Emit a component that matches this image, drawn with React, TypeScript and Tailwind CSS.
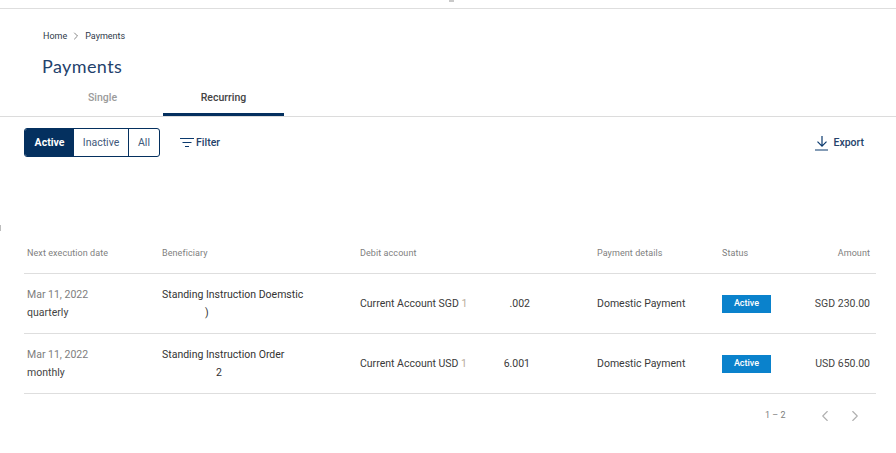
import { ChevronLeft, ChevronRight } from "lucide-react";

const rows = [
  {
    date: "Mar 11, 2022",
    freq: "quarterly",
    name: "Standing Instruction Doemstic",
    ref: ")",
    refPad: "pl-[43px]",
    acc: "Current Account SGD",
    accEnd: ".002",
    amount: "SGD 230.00",
  },
  {
    date: "Mar 11, 2022",
    freq: "monthly",
    name: "Standing Instruction Order",
    ref: "2",
    refPad: "pl-[54px]",
    acc: "Current Account USD",
    accEnd: "6.001",
    amount: "USD 650.00",
  },
];

const cols = "grid grid-cols-[135px_198px_237px_125px_1fr] pl-[3px] pr-[6px]";

function FilterIcon() {
  return (
    <svg width="14" height="11" viewBox="0 0 14 11" fill="none" stroke="#0b3a6e" strokeWidth="1.2">
      <path d="M0 1.5h14M2.5 5.5h9M5 9.5h4" />
    </svg>
  );
}

function ExportIcon() {
  return (
    <svg width="14" height="15" viewBox="0 0 14 15" fill="none" stroke="#0b3a6e" strokeWidth="1.2">
      <path d="M7 0v10M2.5 5.7 7 10.2l4.5-4.5M0 14h13" />
    </svg>
  );
}

export default function App() {
  return (
    <div className="relative h-[453px] w-[896px] overflow-hidden bg-white font-['Roboto',sans-serif] text-[#333]">
      <div className="absolute left-[449px] top-0 h-[2px] w-[5px] bg-[#c9c9c9]" />
      <div className="absolute left-0 top-[225px] h-[6px] w-[1px] bg-[#bdbdbd]" />

      <div className="h-[9px] border-b border-[#dedede]" />

      <div className="pl-[43px] pt-[21px]">
        <div className="flex h-[12px] items-center text-[9px] leading-3 text-[#2f3a4a]">
          <span>Home</span>
          <ChevronRight size={12} strokeWidth={1.3} className="mx-[3px] text-[#444]" />
          <span>Payments</span>
        </div>
        <h1 className="-ml-px mt-[12px] font-['Lato',sans-serif] text-[18px] leading-[24px] tracking-[0.4px] text-[#1f426c]">
          Payments
        </h1>
      </div>

      <div className="mt-[8px] flex h-[31px] border-b border-[#dcdcdc] pl-[42px]">
        <div className="flex w-[121px] items-center justify-center pb-[6px] text-[10.5px] font-medium text-[#9b9b9b]">
          Single
        </div>
        <div className="flex w-[121px] items-center justify-center border-b-[3px] border-[#04305f] pb-[3px] text-[10.5px] font-medium text-[#444]">
          Recurring
        </div>
      </div>

      <div className="mt-[11px] flex h-[29px] items-center pl-[24px] pr-[32px]">
        <div className="flex h-[29px] w-[136px] overflow-hidden rounded-[3px] border border-[#04305f] text-[10.5px]">
          <div className="flex w-[49px] items-center justify-center bg-[#04305f] font-bold text-white">Active</div>
          <div className="flex w-[55px] items-center justify-center border-r border-[#04305f] text-[#41597a]">Inactive</div>
          <div className="flex flex-1 items-center justify-center text-[#41597a]">All</div>
        </div>
        <div className="ml-[20px] flex items-center gap-[2px] text-[10.5px] font-medium text-[#24426a]">
          <FilterIcon />
          <span>Filter</span>
        </div>
        <div className="ml-auto flex items-center gap-[4px] pt-[1px] text-[10.5px] font-medium text-[#24426a]">
          <ExportIcon />
          <span>Export</span>
        </div>
      </div>

      <div className="ml-[24px] mt-[70px] w-[852px] text-[10.5px]">
        <div className={`${cols} h-[47px] items-center border-b border-[#dedede] pt-[7px] text-[9px] tracking-[0.08px] text-[#808080]`}>
          <div>Next execution date</div>
          <div>Beneficiary</div>
          <div>Debit account</div>
          <div>Payment details</div>
          <div className="flex justify-between">
            <span>Status</span>
            <span>Amount</span>
          </div>
        </div>

        {rows.map((row) => (
          <div key={row.freq} className={`${cols} h-[60px] items-center border-b border-[#dedede]`}>
            <div className="leading-[18px]">
              <div className="text-[#7d7d7d]">{row.date}</div>
              <div className="text-[#444]">{row.freq}</div>
            </div>
            <div className="leading-[18px] text-[#333]">
              <div>{row.name}</div>
              <div className={row.refPad}>{row.ref}</div>
            </div>
            <div className="flex items-center justify-between pr-[67px] text-[#3a3a3a]">
              <span>
                {row.acc} <span className="text-[#b9ad9c]">1</span>
              </span>
              <span>{row.accEnd}</span>
            </div>
            <div className="text-[#3a3a3a]">Domestic Payment</div>
            <div className="flex items-center justify-between">
              <span className="flex h-[18px] w-[49px] items-center justify-center bg-[#0a82cc] text-[9px] font-medium text-white">
                Active
              </span>
              <span className="text-[#444]">{row.amount}</span>
            </div>
          </div>
        ))}

        <div className="flex h-[43px] items-center pl-[741px] pt-[1px] text-[9px] text-[#808080]">
          <span className="w-[51px]">1 – 2</span>
          <ChevronLeft size={18} strokeWidth={1.5} className="text-[#b0b0b0]" />
          <ChevronRight size={18} strokeWidth={1.5} className="ml-[12px] text-[#b0b0b0]" />
        </div>
      </div>
    </div>
  );
}
